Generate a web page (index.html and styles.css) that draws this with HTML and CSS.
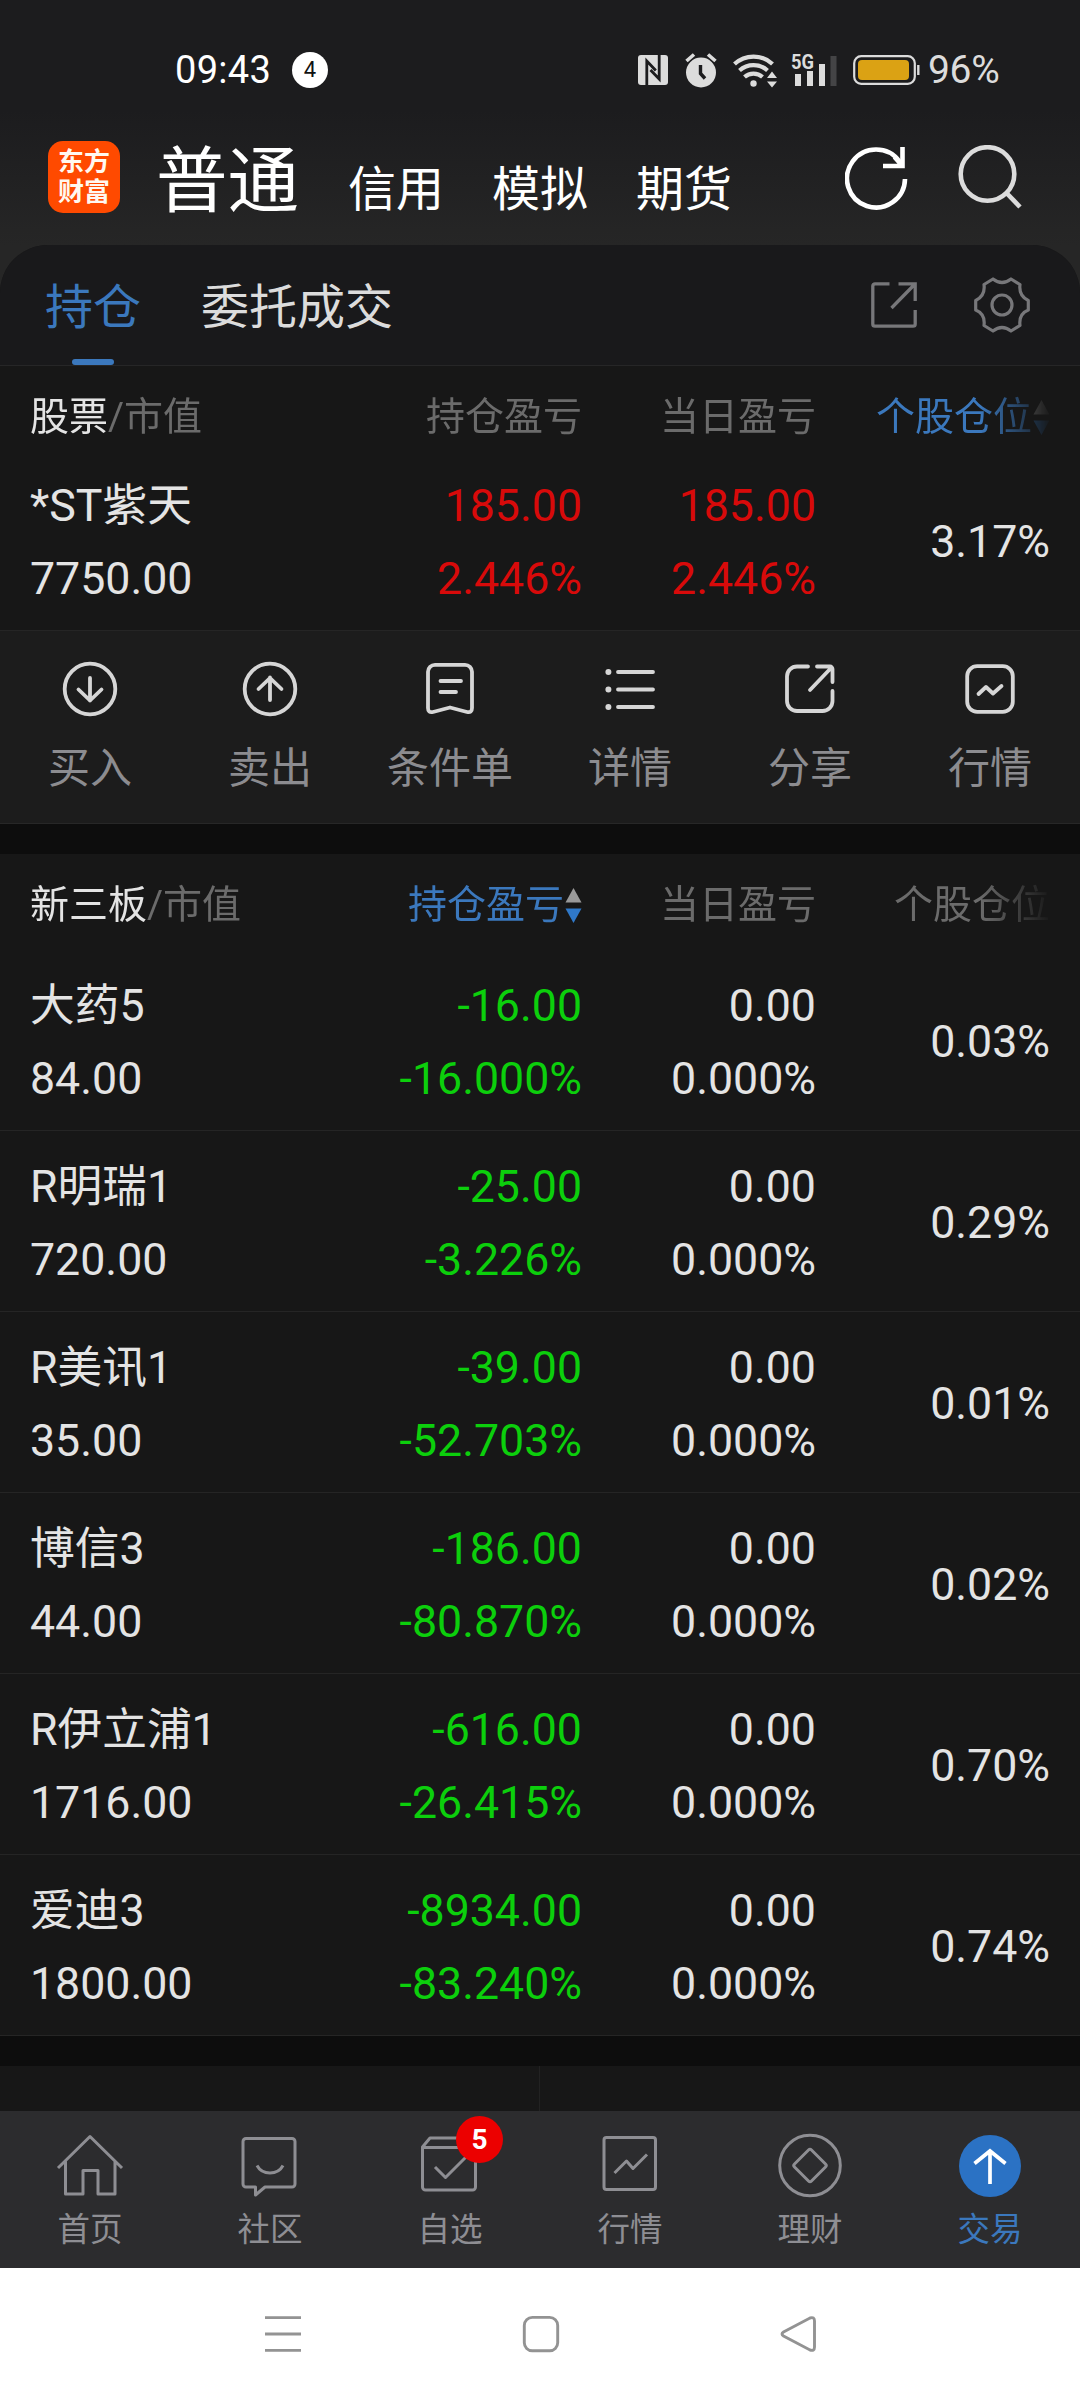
FILE: index.html
```html
<!DOCTYPE html>
<html lang="zh-CN">
<head>
<meta charset="utf-8">
<title>持仓</title>
<link rel="stylesheet" href="styles.css">
</head>
<body>
<div class="screen">
  <header class="top">
    <div class="status">
      <span class="time">09:43</span>
      <span class="count">4</span>
      <div class="status-icons">
        <svg class="nfc" width="30" height="36" viewBox="0 0 30 36"><rect x="0" y="3" width="30" height="30" rx="3" fill="#dcdcdc"/><path d="M8.800 33V9l9 9.500M21.200 3v24L12.500 18" fill="none" stroke="#1c1c1e" stroke-width="2.800"/></svg>
        <svg class="alarm" width="32" height="36" viewBox="0 0 32 36"><circle cx="16" cy="20.500" r="15" fill="#dcdcdc"/><path d="M1.500 9L9 2.500M30.500 9L23 2.500" stroke="#dcdcdc" stroke-width="3.600"/><path d="M15.500 13v8.500l4.500 5" fill="none" stroke="#1c1c1e" stroke-width="3.400"/></svg>
        <svg class="wifi" width="45" height="36" viewBox="0 0 45 36"><g fill="none" stroke="#dcdcdc" stroke-width="4.200"><path d="M1.500 12a28 28 0 0 1 38 0"/><path d="M6.500 18.500a21 21 0 0 1 28 0"/><path d="M11.500 25a13.500 13.500 0 0 1 18 0"/></g><circle cx="20.500" cy="31.500" r="3.200" fill="#dcdcdc"/><path d="M34 26l5-6.500 5 6.500zM34 29.500l5 6 5-6z" fill="#dcdcdc"/></svg>
        <svg class="signal" width="47" height="36" viewBox="0 0 47 36"><text x="0" y="17" class="net" textLength="23" lengthAdjust="spacingAndGlyphs">5G</text><path d="M4 22h6v12H4zM16 19h6v15h-6zM28 12h6v22h-6z" fill="#dcdcdc"/><path d="M39.500 4h6v30h-6z" fill="#444446"/></svg>
        <svg class="battery" width="67" height="36" viewBox="0 0 67 36"><rect x="1.200" y="4.200" width="60.600" height="27.600" rx="7" fill="none" stroke="#dcdcdc" stroke-width="2.200"/><rect x="5" y="8" width="51" height="20" rx="4" fill="#dba214"/><path d="M65.300 13v10" stroke="#dcdcdc" stroke-width="2.400"/></svg>
        <span class="percent">96%</span>
      </div>
    </div>
    <div class="titlebar">
      <div class="logo"><span>东方</span><span>财富</span></div>
      <nav class="accounts">
        <span class="current">普通</span><span>信用</span><span>模拟</span><span>期货</span>
      </nav>
      <div class="tools">
        <svg width="66" height="66" viewBox="0 0 66 66" fill="none" stroke="#fff" stroke-width="4.600"><path d="M60 34A29 29 0 1 1 54.500 16.500"/><path d="M38 21h19.500V2M57.500 21l-8-9"/></svg>
        <svg width="66" height="66" viewBox="0 0 66 66" fill="none" stroke="#dcdcdc" stroke-width="4.600"><circle cx="29.500" cy="29" r="26.800"/><path d="M48.500 48L62 62"/></svg>
      </div>
    </div>
  </header>

  <main class="panel">
    <div class="tabs">
      <span class="tab active">持仓</span>
      <span class="tab">委托成交</span>
      <div class="tab-tools">
        <svg width="46" height="46" viewBox="0 0 46 46" fill="none" stroke="#77777a" stroke-width="3.300"><path d="M18.500 1.800H4a2.200 2.200 0 0 0-2.200 2.200v38A2.200 2.200 0 0 0 4 44.200h38a2.200 2.200 0 0 0 2.200-2.200V28M27.500 1.800h16.700V19M44 2L20.500 26"/></svg>
        <svg width="56" height="56" viewBox="0 0 56 56" fill="none" stroke="#77777a" stroke-width="3.200" stroke-linejoin="round"><circle cx="28" cy="28" r="10"/><path d="M19 2Q28 9 37 2L46 7.500Q44.500 19 54.300 23.500V33Q44.500 37 46 48.500L37 54Q28 47 19 54L10 48.500Q11.500 37 1.700 33V23.500Q11.500 19 10 7.500Z"/></svg>
      </div>
    </div>

    <section>
      <div class="grid head">
        <span class="name"><b>股票</b>/市值</span><span>持仓盈亏</span><span>当日盈亏</span>
        <span class="sorted">个股仓位<svg width="17" height="38" viewBox="0 0 17 38"><path d="M8.500 1L16.500 15.500H.5z" fill="#999"/><path d="M8.500 36L16.500 21.500H.5z" fill="#2f78c8"/></svg></span>
      </div>
      <div class="grid row compact">
        <div class="name">*ST紫天<br>7750.00</div><div class="up">185.00<br>2.446%</div><div class="up">185.00<br>2.446%</div><div class="share">3.17%</div>
      </div>
      <div class="actions">
        <div class="action"><svg viewBox="0 0 60 60"><circle cx="30" cy="30" r="25.300"/><path d="M30 19v22.500M18.500 30.500L30 41.500l11.500-11"/></svg>买入</div>
        <div class="action"><svg viewBox="0 0 60 60"><circle cx="30" cy="30" r="25.300"/><path d="M30 41V18.500M18.500 30L30 19l11.500 11"/></svg>卖出</div>
        <div class="action"><svg viewBox="0 0 60 60"><path d="M15 5.800h30a7 7 0 0 1 7 7V49q0 5-5 4L30 48.500 13 53q-5 1-5-4V12.800a7 7 0 0 1 7-7zM20.500 22H41M20.500 33H36"/></svg>条件单</div>
        <div class="action"><svg viewBox="0 0 60 60"><path d="M18 13h35M18 30.500h35M18 48h35"/><path class="dots" d="M8.400 12.900v.2M8.400 30.400v.2M8.400 47.900v.2"/></svg>详情</div>
        <div class="action"><svg viewBox="0 0 60 60"><path d="M28 7.500H17a10 10 0 0 0-10 10V42a10 10 0 0 0 10 10h25.500a10 10 0 0 0 10-10V32M37 7.500h13a2.500 2.500 0 0 1 2.500 2.500v13M51.500 8.500L30 31"/></svg>分享</div>
        <div class="action"><svg viewBox="0 0 60 60"><rect x="7.200" y="7.200" width="45.600" height="45.600" rx="10"/><path d="M18.500 35l7.500-7 7 6.500 8.500-7.500"/></svg>行情</div>
      </div>
    </section>

    <section class="next">
      <div class="grid head">
        <span class="name"><b>新三板</b>/市值</span>
        <span class="sorted">持仓盈亏<svg width="17" height="38" viewBox="0 0 17 38"><path d="M8.500 1L16.500 15.500H.5z" fill="#999"/><path d="M8.500 36L16.500 21.500H.5z" fill="#2f78c8"/></svg></span>
        <span>当日盈亏</span><span>个股仓位</span>
      </div>
      <div class="grid row"><div class="name">大药5<br>84.00</div><div class="down">-16.00<br>-16.000%</div><div>0.00<br>0.000%</div><div class="share">0.03%</div></div>
      <div class="grid row"><div class="name">R明瑞1<br>720.00</div><div class="down">-25.00<br>-3.226%</div><div>0.00<br>0.000%</div><div class="share">0.29%</div></div>
      <div class="grid row"><div class="name">R美讯1<br>35.00</div><div class="down">-39.00<br>-52.703%</div><div>0.00<br>0.000%</div><div class="share">0.01%</div></div>
      <div class="grid row"><div class="name">博信3<br>44.00</div><div class="down">-186.00<br>-80.870%</div><div>0.00<br>0.000%</div><div class="share">0.02%</div></div>
      <div class="grid row"><div class="name">R伊立浦1<br>1716.00</div><div class="down">-616.00<br>-26.415%</div><div>0.00<br>0.000%</div><div class="share">0.70%</div></div>
      <div class="grid row"><div class="name">爱迪3<br>1800.00</div><div class="down">-8934.00<br>-83.240%</div><div>0.00<br>0.000%</div><div class="share">0.74%</div></div>
    </section>
    <div class="links"><i></i><i></i></div>
  </main>

  <nav class="tabbar">
    <div class="item"><svg viewBox="0 0 72 72"><path d="M4 39L36 7.500 68 39M11.500 32.500V65h17.500V41.500h15V65H61V32.500"/></svg>首页</div>
    <div class="item"><svg viewBox="0 0 72 72"><path d="M12 9.500h46a3 3 0 0 1 3 3V55a3 3 0 0 1-3 3H31l-9.500 8V58H12a3 3 0 0 1-3-3V12.500a3 3 0 0 1 3-3zM23 36.500q4 7.500 13 7.500t13-7.500"/></svg>社区</div>
    <div class="item"><svg viewBox="0 0 72 72"><path d="M8.500 18L16 9h38l7.500 9v40a3 3 0 0 1-3 3h-47a3 3 0 0 1-3-3zM8.500 18.500h53M21 38l10.500 10.500L55 25"/></svg><span class="badge">5</span>自选</div>
    <div class="item"><svg viewBox="0 0 72 72"><rect x="10" y="8.500" width="51.500" height="52" rx="2.500"/><path d="M20.500 44l12-12 6.500 7.500 14-14"/></svg>行情</div>
    <div class="item"><svg viewBox="0 0 72 72"><circle cx="36" cy="36.500" r="30.300"/><path d="M34.500 21q1.500-1.500 3 0l14 14q1.500 1.500 0 3l-14 14q-1.500 1.500-3 0l-14-14q-1.500-1.500 0-3z"/></svg>理财</div>
    <div class="item active"><svg viewBox="0 0 72 72"><circle class="disc" cx="36" cy="37" r="31"/><path d="M36 55V22M20.500 34.500L36 22 51.500 34.500"/></svg>交易</div>
  </nav>

  <footer class="system">
    <svg width="40" height="40" viewBox="0 0 40 40"><path d="M2 3.600h36M2 20h36M2 36.400h36"/></svg>
    <svg width="40" height="40" viewBox="0 0 40 40"><rect x="3.300" y="3.400" width="33.400" height="33.400" rx="8"/></svg>
    <svg class="back" width="40" height="40" viewBox="0 0 40 40"><path d="M4.500 18Q1.500 20 4.500 22L31 36q4.500 1.500 4.500-3V7q0-4.500-4.500-3z"/></svg>
  </footer>
</div>
</body>
</html>
```
FILE: styles.css
```css
* { box-sizing: border-box; }
body {
  margin: 0;
  background: #171717;
  color: #e4e4e4;
  font-family: Roboto, "Noto Sans CJK SC", sans-serif;
}
svg { display: block; flex: none; }
.screen {
  width: 1080px;
  height: 2400px;
  display: flex;
  flex-direction: column;
  overflow: hidden;
}

/* status bar and account switcher */
.top {
  height: 293px;
  margin-bottom: -48px;
  flex: none;
  background: linear-gradient(#1c1c1e 0, #1c1c1e 110px, #262626 245px);
}
.status {
  height: 110px;
  padding: 32px 78px 2px 175px;
  display: flex;
  align-items: center;
}
.time { padding-top: 1px; font-size: 38px; line-height: 75px; color: #fff; width: 117px; letter-spacing: .3px; }
.count {
  width: 36px;
  height: 36px;
  border-radius: 50%;
  background: #fff;
  color: #111;
  font-size: 22px;
  line-height: 36px;
  text-align: center;
}
.status-icons { margin-left: auto; display: flex; align-items: center; }
.nfc { margin-right: 17px; }
.alarm { margin-right: 16px; }
.wifi { margin-right: 13px; }
.signal { margin-right: 15px; overflow: visible; }
.net { font: 700 20px Roboto, sans-serif; fill: #dcdcdc; }
.percent { width: 74px; margin-left: 8px; font-size: 39px; line-height: 76px; color: #dcdcdc; letter-spacing: -.3px; }
.titlebar {
  height: 135px;
  padding: 0 56px 0 48px;
  display: flex;
}
.logo {
  width: 72px;
  height: 72px;
  margin-top: 31px;
  border-radius: 15px;
  background: #ff4a00;
  color: #fff8f0;
  font-weight: 700;
  font-size: 26px;
  line-height: 30px;
  padding-top: 6px;
  display: flex;
  flex-direction: column;
  align-items: center;
}
.accounts {
  margin-left: 36px;
  padding-top: 24px;
  display: flex;
  align-items: baseline;
  gap: 48px;
  color: #fff;
  font-size: 48px;
  line-height: 96px;
}
.accounts .current { width: 143px; margin-right: 1px; font-size: 71.5px; }
.tools { margin-left: auto; padding-top: 35px; display: flex; gap: 47px; }

/* positions panel */
.panel {
  height: 1866px;
  flex: none;
  border-radius: 48px 48px 0 0;
  background: #171717;
  overflow: hidden;
}
.tabs {
  height: 121px;
  padding: 5px 50px 0 45px;
  display: flex;
  gap: 60px;
  border-bottom: 1px solid #262627;
  background: #19191b;
  font-size: 48px;
  line-height: 115px;
}
.tab { position: relative; color: #dcdcdc; }
.tab.active { color: #3b78bd; }
.tab.active::after {
  content: "";
  position: absolute;
  left: 27px;
  bottom: 0;
  width: 42px;
  height: 6px;
  border-radius: 3px;
  background: #3b78bd;
}
.tab-tools { margin-left: auto; padding-bottom: 6px; display: flex; align-items: center; gap: 57px; }
.grid {
  display: grid;
  grid-template-columns: 318px 234px 234px 234px;
  padding: 0 30px;
  text-align: right;
}
.name { text-align: left; }
.head {
  height: 96px;
  padding-top: 27px;
  align-items: start;
  font-size: 39px;
  line-height: 49px;
  color: #6b6b6b;
  -webkit-mask-image: linear-gradient(90deg, #000 980px, transparent 1052px);
  mask-image: linear-gradient(90deg, #000 980px, transparent 1052px);
}
.head b { font-weight: 400; color: #e4e4e4; }
.sorted { display: flex; justify-content: flex-end; align-items: center; gap: 1px; color: #3b78bd; }
.row {
  height: 181px;
  padding-top: 20px;
  align-content: start;
  border-bottom: 1px solid #252525;
  font-size: 44.7px;
  line-height: 73px;
}
.row.compact { height: 169px; padding-top: 8px; }
.share { padding-top: 36px; }
.up { color: #d80a0a; }
.down { color: #0ccf0c; }
.actions {
  height: 193px;
  display: grid;
  grid-template-columns: repeat(6, 1fr);
  background: #1c1c1c;
  border-bottom: 1px solid #272727;
}
.action {
  padding-top: 28px;
  display: flex;
  flex-direction: column;
  align-items: center;
  gap: 18px;
  color: #8c8c90;
  font-size: 42px;
  line-height: 64px;
}
.action svg {
  width: 60px;
  height: 60px;
  fill: none;
  stroke: #d6d6d6;
  stroke-width: 3.8;
  stroke-linecap: round;
  stroke-linejoin: round;
}
.action .dots { stroke-width: 6; }
.next { border-top: 30px solid #0d0d0d; }
.links {
  height: 75px;
  border-top: 30px solid #0d0d0d;
  display: grid;
  grid-template-columns: 540px 540px;
}
.links i:first-child { border-right: 1px solid #222; }

/* app tab bar */
.tabbar {
  height: 157px;
  flex: none;
  display: grid;
  grid-template-columns: repeat(6, 1fr);
  background: #2c2c2e;
}
.item {
  position: relative;
  padding-top: 18px;
  display: flex;
  flex-direction: column;
  align-items: center;
  gap: 5px;
  color: #8e8e93;
  font-size: 32.5px;
  line-height: 48px;
}
.item svg { width: 72px; height: 72px; fill: none; stroke: #8e8e93; stroke-width: 3; stroke-linejoin: round; }
.item.active { color: #3b78bd; }
.item.active svg { stroke: #fff; stroke-width: 3.7; stroke-linejoin: miter; }
.item .disc { fill: #2b72c4; stroke: none; }
.badge {
  position: absolute;
  left: 96px;
  top: 5px;
  width: 47px;
  height: 47px;
  border-radius: 50%;
  background: #ec0000;
  color: #fff;
  font-weight: 700;
  font-size: 28px;
  line-height: 48px;
  text-align: center;
}

/* system navigation */
.system {
  height: 132px;
  flex: none;
  padding: 46px 261px 0 263px;
  display: flex;
  justify-content: space-between;
  background: #fff;
}
.system svg { fill: none; stroke: #939393; stroke-width: 2.9; }
```
